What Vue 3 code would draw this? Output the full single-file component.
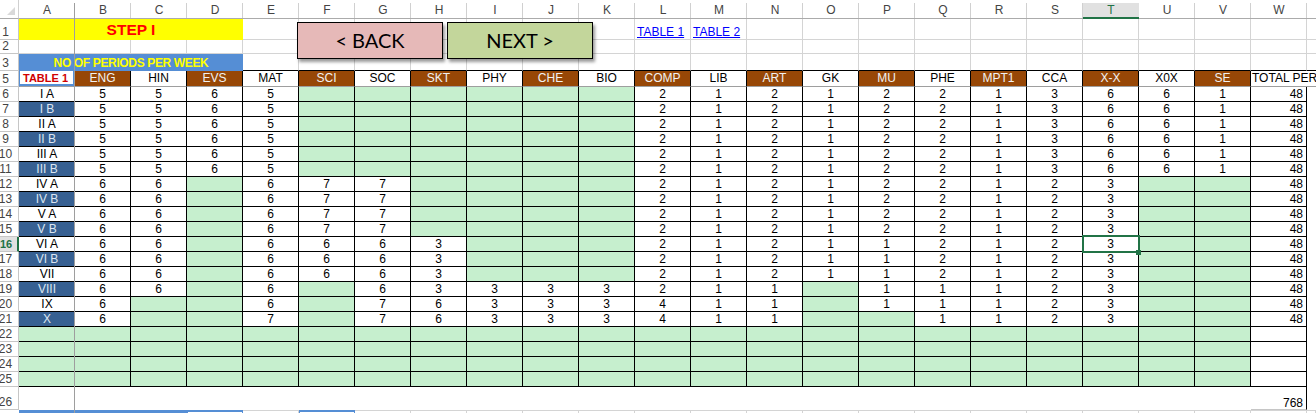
<script setup>
const letters = 'ABCDEFGHIJKLMNOPQRSTUVW'.split('')
const subjects = ['ENG','HIN','EVS','MAT','SCI','SOC','SKT','PHY','CHE','BIO','COMP','LIB','ART','GK','MU','PHE','MPT1','CCA','X-X','X0X','SE']

const n = null
const g1 = [5,5,6,5,n,n,n,n,n,n,2,1,2,1,2,2,1,3,6,6,1]
const g2 = [6,6,n,6,7,7,n,n,n,n,2,1,2,1,2,2,1,2,3,n,n]
const g3 = [6,6,n,6,6,6,3,n,n,n,2,1,2,1,1,2,1,2,3,n,n]
const rows = [
  { label: 'I A', vals: g1 }, { label: 'I B', vals: g1 },
  { label: 'II A', vals: g1 }, { label: 'II B', vals: g1 },
  { label: 'III A', vals: g1 }, { label: 'III B', vals: g1 },
  { label: 'IV A', vals: g2 }, { label: 'IV B', vals: g2 },
  { label: 'V A', vals: g2 }, { label: 'V B', vals: g2 },
  { label: 'VI A', vals: g3 }, { label: 'VI B', vals: g3 },
  { label: 'VII', vals: g3 },
  { label: 'VIII', vals: [6,6,n,6,n,6,3,3,3,3,2,1,1,n,1,1,1,2,3,n,n] },
  { label: 'IX', vals: [6,n,n,6,n,7,6,3,3,3,4,1,1,n,1,1,1,2,3,n,n] },
  { label: 'X', vals: [6,n,n,7,n,7,6,3,3,3,4,1,1,n,n,1,1,2,3,n,n] }
]
const blank = Array(21).fill(n)
const emptyRows = [22, 23, 24, 25]
</script>

<template>
  <div class="sheet">
    <!-- column headers -->
    <div class="corner">
      <svg width="19" height="19" viewBox="0 0 19 19"><polygon points="15,7 15,15 7,15" fill="#d9d9d9" /></svg>
    </div>
    <div v-for="l in letters" :key="l" class="colhead" :class="{ active: l === 'T' }">{{ l }}</div>
    <div class="colhead end"></div>

    <!-- row 1 -->
    <div class="rowhead">1</div>
    <div class="step">STEP I</div>
    <div v-for="l in letters.slice(4)" :key="'r1' + l" class="plain">
      <a v-if="l === 'L'" class="link">TABLE 1</a>
      <a v-else-if="l === 'M'" class="link">TABLE 2</a>
    </div>
    <div class="plain end"></div>

    <!-- row 2 -->
    <div class="rowhead">2</div>
    <div v-for="l in letters" :key="'r2' + l" class="plain"></div>
    <div class="plain end"></div>

    <!-- row 3 -->
    <div class="rowhead">3</div>
    <div class="periods">NO OF PERIODS PER WEEK</div>
    <div v-for="l in letters.slice(4)" :key="'r3' + l" class="plain above"></div>
    <div class="plain above end"></div>

    <!-- row 5 -->
    <div class="rowhead">5</div>
    <div class="table-label">TABLE 1</div>
    <div v-for="(s, i) in subjects" :key="s" class="subject" :class="{ brown: i % 2 === 0 }">{{ s }}</div>
    <div class="total-head">TOTAL PER</div>
    <div class="total-over"></div>

    <!-- rows 6-21 -->
    <template v-for="(r, ri) in rows" :key="r.label">
      <div class="rowhead" :class="{ active: ri === 10 }">{{ ri + 6 }}</div>
      <div class="name" :class="{ blue: ri % 2 === 1 }">{{ r.label }}</div>
      <div
        v-for="(v, ci) in r.vals"
        :key="ci"
        class="cell"
        :class="{ green: v === null, selected: ri === 10 && ci === 18 }"
      >{{ v }}</div>
      <div class="cell total">48</div>
      <div class="blank"></div>
    </template>

    <!-- rows 22-25 -->
    <template v-for="num in emptyRows" :key="num">
      <div class="rowhead">{{ num }}</div>
      <div class="name green"></div>
      <div v-for="(v, ci) in blank" :key="ci" class="cell green"></div>
      <div class="cell total"></div>
      <div class="blank"></div>
    </template>

    <!-- row 26 -->
    <div class="rowhead tall">26</div>
    <div class="bottom-space"></div>
    <div class="cell total sum">768</div>
    <div class="blank"></div>

    <!-- row 27, cut off by the window -->
    <div class="rowhead last"></div>
    <div class="band"></div>
    <div class="boxed"></div>
    <div class="tick"></div>
    <div class="boxed"></div>
    <div v-for="k in 19" :key="'t' + k" class="tick"></div>

    <!-- overlays -->
    <button class="shape back">&lt; BACK</button>
    <button class="shape next">NEXT &gt;</button>
    <div class="freeze"></div>
  </div>
</template>

<style>
html, body { margin: 0; background: #fff; overflow: hidden; }
</style>

<style scoped>
.sheet {
  position: relative;
  width: 1316px;
  height: 413px;
  overflow: hidden;
  display: grid;
  grid-template-columns: 19px repeat(23, 56px) 9px;
  grid-template-rows: 19px 21px 14px 17px 16px repeat(20, 15px) 23px 3px;
  font-family: "Liberation Sans", Arial, sans-serif;
  font-size: 12px;
  color: #000;
  background: #fff;
}
.sheet > div { box-sizing: border-box; min-width: 0; }

.corner { border-bottom: 1px solid #ababab; border-right: 1px solid #d0d0d0; line-height: 0; }
.colhead {
  border-bottom: 1px solid #ababab;
  background: linear-gradient(#fff 3px, transparent 3px), linear-gradient(#d0d0d0, #d0d0d0) right 0 / 1px 100% no-repeat;
  text-align: center;
  color: #444;
  padding-top: 3px;
  line-height: 15px;
}
.colhead.active {
  background: linear-gradient(#fff 3px, #e1e1e1 3px);
  border-bottom: 2px solid #217346;
  color: #217346;
}
.colhead.end { background: #fff; }

.rowhead {
  border-bottom: 1px solid #c6c6c6;
  border-right: 1px solid #c6c6c6;
  color: #444;
  width: 19px;
  padding-right: 7px;
  text-align: center;
  line-height: 14px;
  display: flex;
  align-items: flex-end;
  justify-content: center;
  white-space: nowrap;
}
.rowhead.active {
  background: #e1e1e1;
  border-right: 2px solid #217346;
  color: #217346;
  font-weight: 700;
  font-size: 11px;
  padding-right: 5px;
}
.rowhead.last { border: 0; }

.plain { border-right: 1px solid #d4d4d4; border-bottom: 1px solid #d4d4d4; white-space: nowrap; }
.plain.above { border-bottom: 1px solid #000; }
.plain.end { border-right: 0; }

.step {
  grid-column: span 4;
  background: #ff0;
  color: #f00;
  font-weight: 700;
  font-size: 15.5px;
  text-align: center;
  line-height: 21px;
}
.periods {
  grid-column: span 4;
  background: #558ed5;
  color: #ff0;
  font-weight: 700;
  font-size: 12px;
  text-align: center;
  line-height: 18px;
  letter-spacing: -0.36px;
  border-bottom: 1px solid #558ed5;
  white-space: nowrap;
}
.link {
  display: block;
  color: #00f;
  text-decoration: underline;
  padding: 6px 0 0 2px;
  line-height: 15px;
}

.table-label {
  background: #fff;
  color: #d00000;
  font-weight: 700;
  font-size: 11px;
  text-align: center;
  line-height: 14px;
  padding-right: 2px;
  border-left: 1px solid #558ed5;
  border-right: 2px solid #558ed5;
  border-bottom: 1px solid #9e9e9e;
  box-shadow: inset 0 -2px #558ed5;
  white-space: nowrap;
}
.subject {
  text-align: center;
  line-height: 15px;
  border-right: 1px solid #000;
  border-bottom: 1px solid #9e9e9e;
}
.subject.brown { background: #974706; color: #f2f2f2; }
.total-head {
  line-height: 15px;
  padding-left: 1px;
  white-space: nowrap;
  border-bottom: 1px solid #9e9e9e;
  position: relative;
  z-index: 1;
}
.total-over { border-bottom: 1px solid #9e9e9e; }

.name {
  text-align: center;
  line-height: 14px;
  border-bottom: 1px solid #000;
  white-space: nowrap;
}
.name.blue { background: #376092; color: #dce6f1; }

.cell {
  position: relative;
  text-align: center;
  line-height: 14px;
  border-right: 1px solid #000;
  border-bottom: 1px solid #000;
}
.green { background: #c6efce; }
.total { text-align: right; padding-right: 3px; }
.sum { border-bottom: 1px solid #c6c6c6; padding-top: 9px; }
.blank { background: #fff; }

.selected::before {
  content: "";
  position: absolute;
  left: -1px;
  right: -2px;
  top: -2px;
  bottom: -2px;
  border: 2px solid #217346;
  z-index: 2;
}
.selected::after {
  content: "";
  position: absolute;
  right: -3px;
  bottom: -4px;
  width: 5px;
  height: 5px;
  background: #217346;
  z-index: 3;
}

.bottom-space { grid-column: span 22; }

.band { grid-column: span 3; background: #558ed5; }
.boxed {
  border-top: 2px solid #558ed5;
  border-left: 1px solid #558ed5;
  border-right: 1px solid #558ed5;
}
.tick { border-right: 1px solid #d4d4d4; border-top: 1px solid #d4d4d4; }

.shape {
  position: absolute;
  top: 22px;
  width: 146px;
  height: 37px;
  box-sizing: border-box;
  border: 1px solid #000;
  box-shadow: 2px 3px 3px rgba(0, 0, 0, 0.4);
  font-family: Lato, "Open Sans", sans-serif;
  font-size: 20px;
  color: #000;
  padding: 0 0 1px;
  z-index: 4;
}
.back { left: 297px; background: #e6b9b8; }
.next { left: 447px; background: #c3d69b; }

.freeze {
  position: absolute;
  left: 74px;
  top: 3px;
  bottom: 0;
  width: 1px;
  background: #9e9e9e;
  z-index: 1;
}
</style>
